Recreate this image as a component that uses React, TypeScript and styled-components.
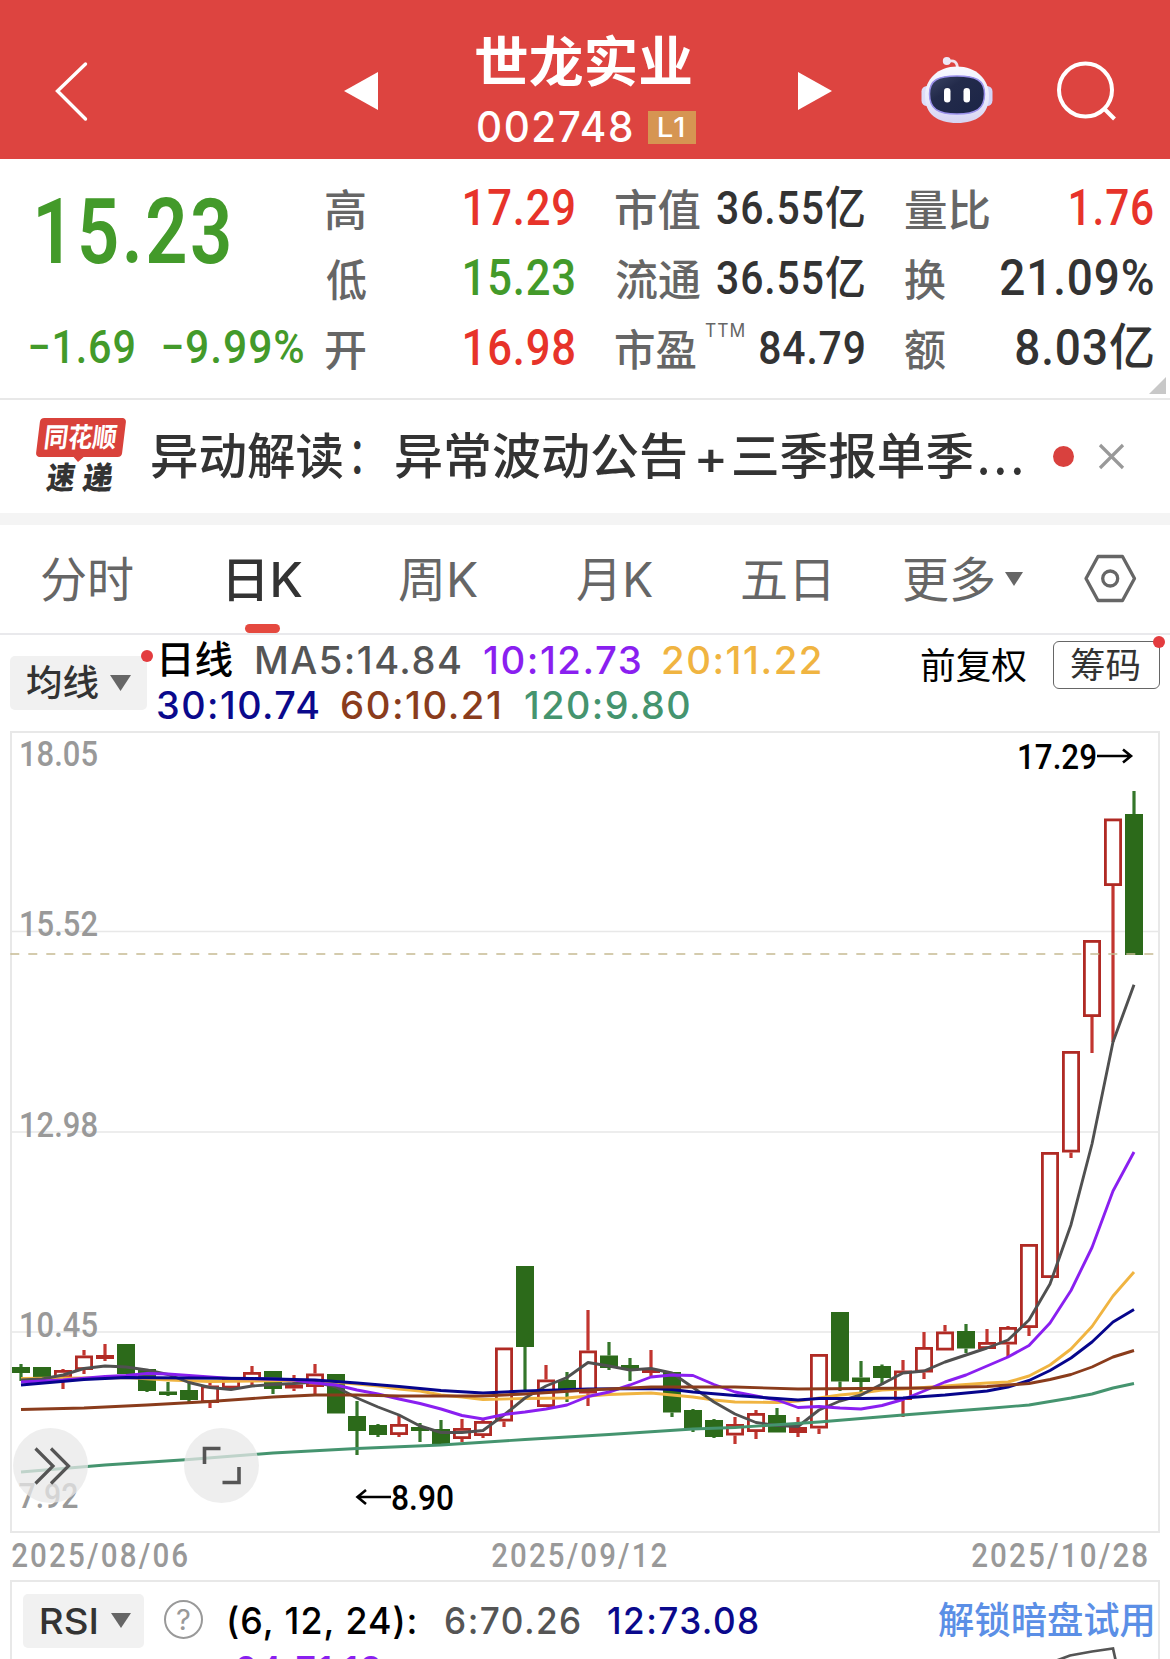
import React, { useLayoutEffect, useState } from 'react';
import styled, { createGlobalStyle } from 'styled-components';

const SANS = '"Inter", "Noto Sans CJK SC", sans-serif';
const DIN = '"Roboto", "Noto Sans CJK SC", sans-serif';

const C = {
  brand: '#dd4440',
  up: '#e7332a',
  down: '#439a2a',
  ink: '#333333',
  label: '#666666',
  axis: '#999999',
  line: '#e8e8e8',
  candleUp: '#b02a24',
  candleDown: '#2c6a1a',
};

const Global = createGlobalStyle`
  * { box-sizing: border-box; }
  body { margin: 0; background: #fff; overflow: hidden; }
  button { border: 0; margin: 0; padding: 0; background: none; display: block; }
  svg { display: block; }
`;

/* Text condensed or widened to a fixed width, like the app's DIN numerals. */
const FitBox = styled.span<{ $w: number; $h: number; $color: string; $size: number; $weight: number; $font: string; $ls: number; $ml: number }>`
  display: block;
  flex: none;
  width: ${p => p.$w}px;
  height: ${p => p.$h}px;
  line-height: ${p => p.$h}px;
  margin-left: ${p => p.$ml}px;
  color: ${p => p.$color};
  font-family: ${p => p.$font};
  font-size: ${p => p.$size}px;
  font-weight: ${p => p.$weight};
  letter-spacing: ${p => p.$ls}px;
  white-space: nowrap;
`;
const FitInner = styled.span`
  display: inline-block;
  height: 100%;
  vertical-align: top;
  transform-origin: 0 50%;
`;

type FitProps = { children: string; w: number; size: number; h?: number; color?: string; weight?: number; font?: string; ls?: number; ml?: number };
function Fit({ children, w, size, h = 48, color = C.ink, weight = 500, font = SANS, ls = 0, ml = 0 }: FitProps) {
  const [t, setT] = useState('none');
  useLayoutEffect(() => {
    const ctx = document.createElement('canvas').getContext('2d');
    if (!ctx) return;
    ctx.font = `${weight} ${size}px ${font}`;
    (ctx as any).letterSpacing = `${ls}px`;
    const m = ctx.measureText(children);
    const k = w / (m.actualBoundingBoxLeft + m.actualBoundingBoxRight);
    setT(`translateX(${m.actualBoundingBoxLeft * k}px) scaleX(${k})`);
  }, [children, w, size, weight, font, ls]);
  return (
    <FitBox $w={w} $h={h} $color={color} $size={size} $weight={weight} $font={font} $ls={ls} $ml={ml}>
      <FitInner style={{ transform: t }}>{children}</FitInner>
    </FitBox>
  );
}

const Page = styled.main`
  width: 1170px;
  height: 1659px;
  overflow: hidden;
  background: #fff;
  display: flex;
  flex-direction: column;
`;

/* ---------- header ---------- */
const Header = styled.header`
  flex: none;
  height: 159px;
  background: ${C.brand};
  display: flex;
  align-items: flex-start;
`;
const HeadButton = styled.button<{ $ml: number; $mt: number }>`
  flex: none;
  margin: ${p => p.$mt}px 0 0 ${p => p.$ml}px;
`;
const TitleBlock = styled.div`
  width: 220px;
  margin-left: 98px;
  padding-top: 28px;
`;
const CodeRow = styled.div`
  display: flex;
  align-items: center;
  padding-left: 2px;
  height: 59px;
`;
const Level = styled.span`
  display: flex;
  align-items: center;
  width: 48px;
  height: 33px;
  margin: 2px 0 0 16px;
  padding-left: 11px;
  background: #d69552;
`;

function Robot() {
  return (
    <svg width="74" height="68" viewBox="0 0 74 68">
      <defs>
        <linearGradient id="shell" x1="0" y1="0" x2="0" y2="1">
          <stop offset="0" stopColor="#f9faff" />
          <stop offset=".6" stopColor="#e8e8fa" />
          <stop offset="1" stopColor="#d6d3f2" />
        </linearGradient>
        <linearGradient id="visor" x1="0" y1="0" x2="1" y2="1">
          <stop offset="0" stopColor="#3c4566" />
          <stop offset=".35" stopColor="#232b4b" />
          <stop offset="1" stopColor="#1b2446" />
        </linearGradient>
      </defs>
      <path d="M28 5.500C34 3.500 37.500 6 37.500 13" fill="none" stroke="#f2e3ec" strokeWidth="2.800" />
      <circle cx="26.800" cy="5" r="4" fill="#eee8f6" />
      <rect x="1.500" y="30" width="12" height="20" rx="5.500" fill="#dcdcf8" />
      <rect x="60.500" y="30" width="12" height="20" rx="5.500" fill="#d3d4f7" />
      <path d="M37 10.500C56 10.500 69 23 69 40C69 58 57 67 37 67C17 67 5 58 5 40C5 23 18 10.500 37 10.500Z" fill="url(#shell)" />
      <path d="M37 20C56 20 64.500 24 64.500 38C64.500 53 56 58 37 58C18 58 9.500 53 9.500 38C9.500 24 18 20 37 20Z" fill="url(#visor)" stroke="#9a90ea" strokeWidth="1.500" />
      <rect x="24" y="32" width="6.500" height="14.500" rx="3.250" fill="#fff" />
      <rect x="43.500" y="32" width="6.500" height="14.500" rx="3.250" fill="#fff" />
    </svg>
  );
}

/* ---------- quote panel ---------- */
const Quote = styled.section`
  flex: none;
  position: relative;
  height: 241px;
  padding-top: 14px;
  border-bottom: 2px solid ${C.line};
  display: grid;
  grid-template-columns: 326px 290px 289px 248px;
`;
const Column = styled.div`
  display: flex;
  flex-direction: column;
`;
const StatColumn = styled(Column)`
  width: 248px;
`;
const Cell = styled.div`
  height: 70px;
  display: flex;
  justify-content: space-between;
  align-items: center;
`;
const PriceBox = styled.div`
  height: 140px;
  padding: 13px 0 0 38px;
`;
const ChangeRow = styled.div`
  display: flex;
  padding: 10px 0 0 30px;
`;
const Label = styled.span`
  display: flex;
  align-items: flex-start;
  padding-top: 4px;
`;
const Corner = styled.i`
  position: absolute;
  right: 4px;
  bottom: 4px;
  width: 17px;
  height: 17px;
  background: #c8c8c8;
  clip-path: polygon(100% 0, 100% 100%, 0 100%);
`;

type Stat = { label: string; lw: number; value: string; w: number; size: number; color?: string; ttm?: boolean };
const stats: Stat[][] = [
  [
    { label: '高', lw: 39, value: '17.29', w: 109, size: 50, color: C.up },
    { label: '低', lw: 40, value: '15.23', w: 109, size: 50, color: C.down },
    { label: '开', lw: 39, value: '16.98', w: 109, size: 50, color: C.up },
  ],
  [
    { label: '市值', lw: 84, value: '36.55亿', w: 147, size: 46 },
    { label: '流通', lw: 84, value: '36.55亿', w: 147, size: 46 },
    { label: '市盈', lw: 80, value: '84.79', w: 104, size: 46, ttm: true },
  ],
  [
    { label: '量比', lw: 84, value: '1.76', w: 82, size: 50, color: C.up },
    { label: '换', lw: 40, value: '21.09%', w: 152, size: 50 },
    { label: '额', lw: 40, value: '8.03亿', w: 137, size: 50 },
  ],
];

/* ---------- news strip ---------- */
const News = styled.section`
  flex: none;
  height: 125px;
  border-bottom: 12px solid #f4f4f4;
  display: flex;
  align-items: flex-start;
  padding: 17px 0 0 35px;
`;
const Brand = styled.div`
  width: 92px;
  height: 80px;
  display: flex;
  flex-direction: column;
`;
const BrandTop = styled.div`
  position: relative;
  height: 39px;
  margin: 1px 3px 0 3px;
  padding: 1px 0 0 8px;
  background: #d9423b;
  border-radius: 4px;
  transform: skewX(-7deg);
  &::after {
    content: '';
    position: absolute;
    left: 37px;
    top: 38px;
    border: 6px solid transparent;
    border-top-color: #d9423b;
    border-bottom: 0;
  }
`;
const BrandBottom = styled.div`
  display: flex;
  height: 36px;
  margin: 3px 0 0 12px;
  transform: skewX(-8deg);
`;
const Headline = styled.div`
  display: flex;
  margin: 1px 0 0 25px;
`;
const Dot = styled.i<{ $d: number; $ml: number; $mt: number }>`
  flex: none;
  width: ${p => p.$d}px;
  height: ${p => p.$d}px;
  margin: ${p => p.$mt}px 0 0 ${p => p.$ml}px;
  border-radius: 50%;
  background: #d9413e;
`;

/* ---------- tabs ---------- */
const Tabs = styled.nav`
  flex: none;
  height: 110px;
  border-bottom: 2px solid #e9e9ec;
  display: flex;
  align-items: flex-start;
`;
const Tab = styled.button<{ $ml: number; $active?: boolean }>`
  flex: none;
  height: 109px;
  margin-left: ${p => p.$ml}px;
  padding-top: 23px;
  display: flex;
  flex-direction: column;
  align-items: center;
  &::after {
    content: '';
    width: 35px;
    height: 9px;
    margin: 12px 0 0 -6px;
    border-radius: 5px;
    background: ${p => (p.$active ? '#e5493f' : 'transparent')};
  }
`;
const Caret = styled.i<{ $w: number; $h: number; $ml: number; $mt?: number }>`
  flex: none;
  width: ${p => p.$w}px;
  height: ${p => p.$h}px;
  margin: ${p => p.$mt || 0}px 0 0 ${p => p.$ml}px;
  background: #666;
  clip-path: polygon(0 0, 100% 0, 50% 100%);
`;
const tabs = [
  { t: '分时', ml: 42, w: 91 },
  { t: '日K', ml: 96, w: 73, active: true },
  { t: '周K', ml: 97, w: 78 },
  { t: '月K', ml: 100, w: 75 },
  { t: '五日', ml: 90, w: 86 },
  { t: '更多', ml: 76, w: 90 },
];

/* ---------- indicator legend ---------- */
const Legend = styled.section`
  flex: none;
  height: 96px;
  display: flex;
  align-items: flex-start;
`;
const Picker = styled.button<{ $w: number; $pl: number; $m: string }>`
  position: relative;
  flex: none;
  width: ${p => p.$w}px;
  height: 54px;
  margin: ${p => p.$m};
  padding-left: ${p => p.$pl}px;
  border-radius: 5px;
  background: #f1f1f1;
  display: flex;
  align-items: center;
`;
const Pip = styled.i`
  position: absolute;
  right: -6px;
  top: -6px;
  width: 12px;
  height: 12px;
  border-radius: 50%;
  background: #e33c3f;
`;
const Averages = styled.div`
  width: 675px;
  padding: 1px 0 0 11px;
`;
const AvgRow = styled.div`
  display: flex;
  height: 45px;
`;
const Chips = styled.button`
  position: relative;
  flex: none;
  width: 107px;
  height: 48px;
  margin: 6px 0 0 27px;
  padding-left: 17px;
  border: 1.500px solid #666;
  border-radius: 6px;
  display: flex;
  align-items: center;
`;

/* ---------- chart ---------- */
const ChartArea = styled.section`
  flex: none;
  position: relative;
  height: 803px;
`;
const RoundButton = styled.button<{ $x: number }>`
  position: absolute;
  left: ${p => p.$x}px;
  top: 697px;
  width: 75px;
  height: 75px;
  border-radius: 50%;
  background: rgba(232, 232, 232, 0.75);
`;
const Dates = styled.div`
  flex: none;
  height: 46px;
  padding: 0 23px 0 12px;
  display: flex;
  justify-content: space-between;
`;

// direction, high, body top, body bottom, low
type Candle = ['u' | 'd', number, number, number, number];
const candles: Candle[] = [
  ['d', 1364, 1367, 1373, 1381], ['d', 1367, 1367, 1377, 1377], ['u', 1369, 1370, 1378, 1389],
  ['u', 1350, 1355.5, 1370, 1374], ['u', 1344, 1355, 1359, 1361], ['d', 1344, 1344, 1374, 1374],
  ['d', 1369, 1369, 1391, 1392], ['d', 1382, 1391.5, 1395, 1396], ['d', 1383, 1390, 1400, 1402],
  ['u', 1383, 1385.5, 1403, 1408], ['u', 1378, 1378, 1388.5, 1388], ['u', 1366, 1372, 1380, 1386],
  ['d', 1371, 1371, 1389, 1394], ['u', 1375, 1384.5, 1388.5, 1391], ['u', 1364, 1373.5, 1387, 1394],
  ['d', 1374, 1374, 1413.5, 1413.5], ['d', 1401, 1416, 1431, 1455], ['d', 1424, 1425, 1435, 1437],
  ['u', 1415, 1424, 1435, 1437], ['d', 1423, 1427, 1431, 1442], ['d', 1420, 1429, 1445, 1445],
  ['u', 1419, 1428, 1439, 1442], ['u', 1420, 1421, 1436, 1438], ['u', 1347.5, 1347.5, 1421.5, 1427],
  ['d', 1266, 1266, 1347, 1391], ['u', 1365, 1379.5, 1407, 1407], ['d', 1372, 1380, 1390, 1402],
  ['u', 1310, 1350.5, 1393.5, 1406], ['d', 1342, 1355.5, 1368, 1370], ['d', 1358, 1365, 1369, 1381],
  ['u', 1350, 1370, 1373, 1376], ['d', 1372, 1372, 1412.5, 1417], ['d', 1409, 1410, 1428.5, 1432],
  ['d', 1419, 1420, 1437, 1438], ['u', 1417, 1424, 1435.5, 1444], ['u', 1410, 1413, 1432, 1439],
  ['d', 1408, 1415, 1432.5, 1432], ['u', 1417, 1427, 1433, 1437], ['u', 1354, 1354, 1428.5, 1434],
  ['d', 1312, 1312, 1381.5, 1391], ['d', 1361, 1377.5, 1382, 1393], ['d', 1364.5, 1366, 1378, 1385],
  ['u', 1360, 1370.5, 1400, 1417], ['u', 1332, 1347, 1372.5, 1379], ['u', 1325, 1331.5, 1350.5, 1350],
  ['d', 1324, 1331, 1348.5, 1353], ['u', 1329, 1342, 1349, 1349], ['u', 1326, 1327, 1344.5, 1357],
  ['u', 1244, 1244, 1328, 1336], ['u', 1152, 1152, 1278, 1278], ['u', 1051, 1051, 1152.5, 1158],
  ['u', 940, 940, 1017, 1053], ['u', 818.5, 818.5, 886, 1042], ['d', 791, 814, 955, 955],
];

const everyDay = (ys: number[]) => ys.map((y, i) => [i, y]);
const averages: { color: string; pts: number[][] }[] = [
  {
    color: '#f0b441',
    pts: [[0, 1378.5], [3, 1378], [5, 1377.5], [7, 1380], [9, 1381.5], [11, 1381], [13, 1380.5], [14, 1380.5], [16, 1384], [17, 1386], [18, 1389], [19, 1391], [20, 1395], [21, 1397], [22, 1399.5], [24, 1398.5], [26, 1398], [27, 1396], [28, 1394.5], [30, 1393], [31, 1395], [32, 1397], [33, 1400], [34, 1402], [36, 1402.5], [37, 1401], [38, 1398], [39, 1395], [40, 1393], [41, 1390], [42, 1389], [44, 1386], [46, 1383], [47, 1382], [48, 1376], [49, 1365], [50, 1349], [51, 1326.5], [52, 1296], [53, 1272]],
  },
  {
    color: '#505050',
    pts: everyDay([1380, 1379, 1375, 1368.5, 1366, 1367, 1370, 1374.5, 1382.5, 1387.5, 1389.5, 1386, 1384.5, 1383.5, 1382, 1387, 1398, 1407, 1415, 1426, 1432.5, 1432.5, 1430.5, 1415, 1398, 1386, 1377.5, 1362.5, 1366, 1370, 1368.5, 1373, 1387.5, 1402, 1414, 1422.5, 1425.5, 1426.5, 1410, 1401, 1395, 1384, 1373, 1371, 1362, 1355, 1348, 1340, 1320, 1284, 1224.7, 1144, 1042, 984.7]),
  },
  {
    color: '#8a1ff0',
    pts: [[0, 1382], [2, 1380], [4, 1376.5], [5, 1375.5], [6, 1373.5], [7, 1374], [8, 1375.5], [10, 1378.5], [12, 1379], [13, 1380], [14, 1383], [15, 1385], [16, 1390], [17, 1394], [18, 1399], [19, 1403.5], [20, 1409], [21, 1415.5], [22, 1419], [23, 1414.5], [24, 1412], [25, 1409], [26, 1405], [27, 1396.5], [28, 1392], [29, 1385], [30, 1377], [31, 1375], [32, 1375.5], [33, 1384.5], [34, 1392], [35, 1396], [36, 1400], [37, 1407.5], [38, 1406.5], [39, 1408], [40, 1409], [41, 1405.5], [42, 1399.5], [43, 1391], [44, 1382], [45, 1375], [46, 1366], [47, 1357], [48, 1345.5], [49, 1323], [50, 1290.5], [51, 1247.5], [52, 1191], [53, 1152]],
  },
  {
    color: '#06058c',
    pts: [[0, 1385], [3, 1379.5], [5, 1377.5], [8, 1378], [11, 1378.5], [14, 1380], [16, 1383], [18, 1386.5], [20, 1390.5], [22, 1393], [24, 1391], [27, 1389], [30, 1388.5], [31, 1389.5], [32, 1392], [34, 1395.5], [36, 1398.5], [37, 1400], [38, 1398.5], [40, 1398.5], [42, 1398], [44, 1395], [46, 1391], [47, 1387], [48, 1380.5], [49, 1370.5], [50, 1358], [51, 1342], [52, 1322], [53, 1309.5]],
  },
  {
    color: '#8a3c1c',
    pts: [[0, 1409.5], [3, 1408], [6, 1405], [9, 1401.5], [12, 1397], [14, 1395], [16, 1395], [18, 1396], [22, 1396], [24, 1394], [27, 1390], [30, 1387], [34, 1387], [37, 1389], [40, 1388.5], [43, 1388], [46, 1386.5], [48, 1383.5], [49, 1379.5], [50, 1374.5], [51, 1367], [52, 1357], [53, 1350.5]],
  },
  {
    color: '#45946f',
    pts: [[0, 1472], [4, 1465], [8, 1459.5], [12, 1453], [16, 1448.5], [20, 1445], [24, 1439.5], [28, 1434.5], [32, 1429], [34, 1427.5], [38, 1422], [42, 1415], [46, 1408.5], [48, 1405], [49, 1401.5], [50, 1398], [51, 1394], [52, 1388], [53, 1383.5]],
  },
];

const px = (i: number) => 21 + 21 * i;

const AxisText = styled.text`
  font-family: ${DIN};
  font-size: 35px;
  font-weight: 500;
`;

const axis = [
  { t: '18.05', y: 766 },
  { t: '15.52', y: 936 },
  { t: '12.98', y: 1136.5 },
  { t: '10.45', y: 1337 },
];

function Chart() {
  return (
    <svg width="1170" height="803" viewBox="0 731 1170 803">
      <g stroke={C.line} strokeWidth="2" fill="none">
        <rect x="11" y="732" width="1148" height="800" />
        <path d="M11 931.500H1159M11 1132H1159M11 1332H1159" strokeWidth="1.700" />
      </g>
      {axis.map(a => (
        <AxisText key={a.t} x="19" y={a.y} fill={C.axis} textLength="79" lengthAdjust="spacingAndGlyphs">{a.t}</AxisText>
      ))}
      <AxisText x="18.500" y="1507.500" fill={C.axis} textLength="60" lengthAdjust="spacingAndGlyphs">7.92</AxisText>
      {candles.map(([dir, high, top, bottom, low], i) => {
        const x = px(i);
        const color = dir === 'u' ? C.candleUp : C.candleDown;
        return (
          <g key={i}>
            <path d={`M${x} ${high}V${top}M${x} ${bottom}V${Math.max(low, bottom)}`} stroke={dir === 'u' ? '#c2352f' : '#34762a'} strokeWidth="3.200" />
            {dir === 'u' && bottom - top > 6 ? (
              <rect x={x - 7.6} y={top + 1.4} width="15.200" height={bottom - top - 2.8} fill="none" stroke={color} strokeWidth="2.800" />
            ) : (
              <rect x={x - 9} y={top} width="18" height={bottom - top} fill={color} />
            )}
          </g>
        );
      })}
      {averages.map(a => (
        <polyline key={a.color} fill="none" stroke={a.color} strokeWidth="2.900" strokeLinejoin="round" points={a.pts.map(([i, y]) => `${px(i)},${y}`).join(' ')} />
      ))}
      <path d="M10.300 954H1154" stroke="#c6bb92" strokeWidth="1.700" strokeDasharray="9 9" />
      <AxisText x="1017" y="769" fill="#000" textLength="80" lengthAdjust="spacingAndGlyphs">17.29</AxisText>
      <path d="M1097 756H1131M1123 749.500L1131 756L1123 762.500" fill="none" stroke="#000" strokeWidth="2.600" />
      <path d="M391 1497H357.500M366 1490L357.500 1497L366 1504" fill="none" stroke="#000" strokeWidth="2.600" />
      <AxisText x="391" y="1509.500" fill="#000" textLength="63" lengthAdjust="spacingAndGlyphs">8.90</AxisText>
    </svg>
  );
}

/* ---------- RSI ---------- */
const Rsi = styled.section`
  flex: none;
  width: 1150px;
  height: 110px;
  margin-left: 10px;
  border: 2px solid ${C.line};
  position: relative;
`;
const RsiRow = styled.div`
  display: flex;
  align-items: center;
  height: 77px;
`;
const Help = styled.span`
  display: flex;
  align-items: center;
  justify-content: center;
  width: 39px;
  height: 39px;
  margin: -2px 0 0 20px;
  border: 2.500px solid #999;
  border-radius: 50%;
  color: #999;
  font: 400 29px/34px ${SANS};
`;
const RsiSecond = styled.div`
  padding-left: 225px;
  margin-top: -13px;
`;
const RsiCurve = styled.svg`
  position: absolute;
  right: 1px;
  top: 60px;
`;

export default function App() {
  return (
    <Page>
      <Global />
      <Header>
        <HeadButton $ml={54} $mt={61} aria-label="back">
          <svg width="34" height="61" viewBox="0 0 34 61"><path d="M31.500 3L3.500 30L31.500 58" fill="none" stroke="#fff" strokeWidth="3.400" strokeLinecap="round" /></svg>
        </HeadButton>
        <HeadButton $ml={256} $mt={72} aria-label="previous">
          <svg width="34" height="38" viewBox="0 0 34 38"><path d="M34 0V38L0 19Z" fill="#fff" /></svg>
        </HeadButton>
        <TitleBlock>
          <Fit w={215} size={54} h={69} color="#fff" weight={600}>世龙实业</Fit>
          <CodeRow>
            <Fit w={154} size={42} color="#fff" ls={1.5}>002748</Fit>
            <Level><Fit w={25} size={27} h={33} color="#fff" ls={1}>L1</Fit></Level>
          </CodeRow>
        </TitleBlock>
        <HeadButton $ml={102} $mt={72} aria-label="next">
          <svg width="34" height="38" viewBox="0 0 34 38"><path d="M0 0V38L34 19Z" fill="#fff" /></svg>
        </HeadButton>
        <HeadButton $ml={88} $mt={56} aria-label="assistant"><Robot /></HeadButton>
        <HeadButton $ml={63} $mt={60} aria-label="search">
          <svg width="62" height="62" viewBox="0 0 62 62"><g fill="none" stroke="#fff" strokeWidth="4"><circle cx="28.500" cy="30" r="26.500" /><path d="M47 48.500L57.500 59" /></g></svg>
        </HeadButton>
      </Header>

      <Quote>
        <Column>
          <PriceBox><Fit w={191} size={91} h={92} color={C.down} font={DIN} weight={600} ls={3}>15.23</Fit></PriceBox>
          <ChangeRow>
            <Fit w={104} size={46} color={C.down} font={DIN} ls={1}>−1.69</Fit>
            <Fit w={140} ml={29} size={46} color={C.down} font={DIN} ls={1}>−9.99%</Fit>
          </ChangeRow>
        </Column>
        {stats.map((col, i) => (
          <StatColumn key={i}>
            {col.map(s => (
              <Cell key={s.label}>
                <Label>
                  <Fit w={s.lw} size={43} color={C.label}>{s.label}</Fit>
                  {s.ttm && <Fit w={39} ml={9} size={18} h={10} color={C.label} weight={400} ls={1}>TTM</Fit>}
                </Label>
                <Fit w={s.w} size={s.size} color={s.color || C.ink} font={DIN} ls={1}>{s.value}</Fit>
              </Cell>
            ))}
          </StatColumn>
        ))}
        <Corner />
      </Quote>

      <News>
        <Brand>
          <BrandTop><Fit w={71} size={27} h={37} color="#fff" weight={700}>同花顺</Fit></BrandTop>
          <BrandBottom>
            <Fit w={28} size={31} h={36} weight={900}>速</Fit>
            <Fit w={30} ml={8} size={31} h={36} weight={900}>递</Fit>
          </BrandBottom>
        </Brand>
        <Headline>
          <Fit w={191} size={49} h={78}>异动解读</Fit>
          <Fit w={7} ml={11} size={49} h={76}>：</Fit>
          <Fit w={290} ml={35} size={49} h={78}>异常波动公告</Fit>
          <Fit w={26} ml={12} size={46} h={78}>+</Fit>
          <Fit w={239} ml={10} size={49} h={78}>三季报单季</Fit>
          <Fit w={41} ml={7} size={52} h={78} ls={3}>...</Fit>
        </Headline>
        <Dot $d={21} $ml={32} $mt={29} />
        <HeadButton $ml={24} $mt={26} aria-label="close">
          <svg width="27" height="27" viewBox="0 0 27 27"><path d="M2 2L25 25M25 2L2 25" stroke="#999" strokeWidth="3.200" /></svg>
        </HeadButton>
      </News>

      <Tabs>
        {tabs.map(t => (
          <Tab key={t.t} $ml={t.ml} $active={t.active}>
            <Fit w={t.w} size={48} h={64} weight={t.active ? 500 : 400} color={t.active ? C.ink : C.label}>{t.t}</Fit>
          </Tab>
        ))}
        <Caret $w={18} $h={14} $ml={11} $mt={47} />
        <HeadButton $ml={60} $mt={29} aria-label="settings">
          <svg width="54" height="49" viewBox="0 0 54 49"><g fill="none" stroke="#666" strokeWidth="3.300" strokeLinejoin="round"><path d="M15 2.500H39.500L51.500 24.500L39.500 46.500H15L3 24.500Z" /><circle cx="27.200" cy="24.500" r="7.500" /></g></svg>
        </HeadButton>
      </Tabs>

      <Legend>
        <Picker $w={137} $pl={17} $m="21px 0 0 10px">
          <Fit w={71} size={36} h={50}>均线</Fit>
          <Caret $w={21} $h={16} $ml={12} />
          <Pip />
        </Picker>
        <Averages>
          <AvgRow>
            <Fit w={70} ml={4} size={38} h={46} color="#000">日线</Fit>
            <Fit w={203} ml={25} size={38} color="#555" ls={1.5}>MA5:14.84</Fit>
            <Fit w={156} ml={24} size={38} color="#8a1ff0" ls={1.5}>10:12.73</Fit>
            <Fit w={157} ml={23} size={38} color="#f0b441" ls={1.5}>20:11.22</Fit>
          </AvgRow>
          <AvgRow>
            <Fit w={160} size={38} color="#0a098c" ls={1.5}>30:10.74</Fit>
            <Fit w={157} ml={24} size={38} color="#8a3c1c" ls={1.5}>60:10.21</Fit>
            <Fit w={164} ml={26} size={38} color="#45946f" ls={1.5}>120:9.80</Fit>
          </AvgRow>
        </Averages>
        <Fit w={105} ml={99} size={36} h={63} color="#000" weight={400}>前复权</Fit>
        <Chips>
          <Fit w={68} size={35} weight={400}>筹码</Fit>
          <Pip />
        </Chips>
      </Legend>

      <ChartArea>
        <Chart />
        <RoundButton $x={13} aria-label="expand">
          <svg width="75" height="75" viewBox="0 0 75 75"><path d="M22.500 20.500L40 38L22.500 55.500M38 20.500L55.500 38L38 55.500" fill="none" stroke="#555" strokeWidth="3.200" /></svg>
        </RoundButton>
        <RoundButton $x={184} aria-label="fullscreen">
          <svg width="75" height="75" viewBox="0 0 75 75"><path d="M20.500 36V20.500H36.500M38.500 54.500H55V39" fill="none" stroke="#555" strokeWidth="3.600" /></svg>
        </RoundButton>
      </ChartArea>
      <Dates>
        {['2025/08/06', '2025/09/12', '2025/10/28'].map(d => (
          <Fit key={d} w={175} size={34} h={43} weight={500} color={C.axis} font={DIN} ls={2.5}>{d}</Fit>
        ))}
      </Dates>

      <Rsi>
        <RsiRow>
          <Picker $w={121} $pl={18} $m="0 0 0 11px">
            <Fit w={55} size={36}>RSI</Fit>
            <Caret $w={20} $h={15} $ml={15} />
          </Picker>
          <Help>?</Help>
          <Fit w={187} ml={26} size={37} color="#000" ls={1}>(6, 12, 24):</Fit>
          <Fit w={134} ml={30} size={37} color="#555" ls={1.5}>6:70.26</Fit>
          <Fit w={150} ml={28} size={37} color="#0a098c" ls={1.5}>12:73.08</Fit>
          <Fit w={215} ml={180} size={37} color="#5b8fe6">解锁暗盘试用</Fit>
        </RsiRow>
        <RsiSecond><Fit w={144} size={37} color="#8a1ff0" ls={1.5}>24:71.18</Fit></RsiSecond>
        <RsiCurve width="110" height="30" viewBox="1047 1643 110 30">
          <path d="M1050 1664L1070 1656.500L1092 1652.500L1113 1649.500L1118 1672" fill="none" stroke="#555" strokeWidth="2.700" />
        </RsiCurve>
      </Rsi>
    </Page>
  );
}
